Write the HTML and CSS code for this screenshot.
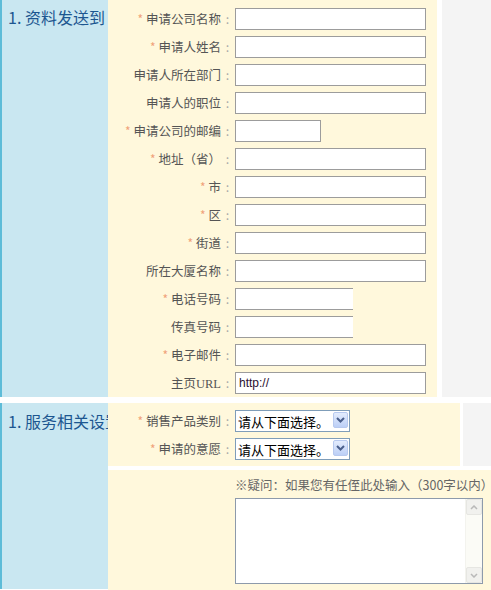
FILE: index.html
```html
<!DOCTYPE HTML>
<html lang="zh-CN">
<head>
    <meta charset="utf-8">
    <title>申请表</title>
    <link rel="stylesheet" href="styles.css">
</head>
<body>
    <div class="page">
        <div class="section s1">
            <div class="side"><h2>1. 资料发送到</h2></div>
            <div class="panel">
                <div class="row"><label><span class="req">*</span>申请公司名称<span class="colon">:</span></label><input type="text" class="w-full"></div>
                <div class="row"><label><span class="req">*</span>申请人姓名<span class="colon">:</span></label><input type="text" class="w-full"></div>
                <div class="row"><label>申请人所在部门<span class="colon">:</span></label><input type="text" class="w-full"></div>
                <div class="row"><label>申请人的职位<span class="colon">:</span></label><input type="text" class="w-full"></div>
                <div class="row"><label><span class="req">*</span>申请公司的邮编<span class="colon">:</span></label><input type="text" class="w-zip"></div>
                <div class="row"><label><span class="req">*</span>地址（省）<span class="colon">:</span></label><input type="text" class="w-full"></div>
                <div class="row"><label><span class="req">*</span>市<span class="colon">:</span></label><input type="text" class="w-full"></div>
                <div class="row"><label><span class="req">*</span>区<span class="colon">:</span></label><input type="text" class="w-full"></div>
                <div class="row"><label><span class="req">*</span>街道<span class="colon">:</span></label><input type="text" class="w-full"></div>
                <div class="row"><label>所在大厦名称<span class="colon">:</span></label><input type="text" class="w-full"></div>
                <div class="row"><label><span class="req">*</span>电话号码<span class="colon">:</span></label><input type="text" class="w-tel"></div>
                <div class="row"><label>传真号码<span class="colon">:</span></label><input type="text" class="w-tel"></div>
                <div class="row"><label><span class="req">*</span>电子邮件<span class="colon">:</span></label><input type="text" class="w-full"></div>
                <div class="row"><label>主页<span class="latin">URL</span><span class="colon">:</span></label><input type="text" class="w-full" value="http://"></div>
            </div>
            <div class="filler"></div>
        </div>

        <div class="section s2">
            <div class="side"><h2>1. 服务相关设置</h2></div>
            <div class="body">
                <div class="block-a">
                    <div class="panel">
                        <div class="row">
                            <label><span class="req">*</span>销售产品类别<span class="colon">:</span></label>
                            <div class="sel">
                                <select><option>请从下面选择。</option></select>
                                <span class="sel-btn"><svg width="9" height="6" viewBox="0 0 9 6"><path d="M1 1 L4.5 4.5 L8 1" fill="none" stroke="#4a5f8c" stroke-width="2"/></svg></span>
                            </div>
                        </div>
                        <div class="row">
                            <label><span class="req">*</span>申请的意愿<span class="colon">:</span></label>
                            <div class="sel">
                                <select><option>请从下面选择。</option></select>
                                <span class="sel-btn"><svg width="9" height="6" viewBox="0 0 9 6"><path d="M1 1 L4.5 4.5 L8 1" fill="none" stroke="#4a5f8c" stroke-width="2"/></svg></span>
                            </div>
                        </div>
                    </div>
                    <div class="filler"></div>
                </div>
                <div class="panel panel-full">
                    <p class="note">※疑问：如果您有任侄此处输入（300字以内）</p>
                    <div class="textbox">
                        <textarea></textarea>
                        <div class="vscroll">
                            <span class="sb-btn"><svg width="8" height="5" viewBox="0 0 8 5"><path d="M1 4 L4 1 L7 4" fill="none" stroke="#b9b9b9" stroke-width="1.5"/></svg></span>
                            <span class="sb-track"></span>
                            <span class="sb-btn"><svg width="8" height="5" viewBox="0 0 8 5"><path d="M1 1 L4 4 L7 1" fill="none" stroke="#b9b9b9" stroke-width="1.5"/></svg></span>
                        </div>
                    </div>
                </div>
            </div>
        </div>
    </div>
</body>
</html>
```

FILE: styles.css
```css
body {
    margin: 0;
    background: #fff;
    font-family: "Noto Sans CJK SC", "Liberation Sans", sans-serif;
    font-size: 12.5px;
    color: #555;
}
.page {
    width: 491px;
    overflow: hidden;
}
.section {
    display: flex;
}
.s1 {
    margin-bottom: 6px;
}
.side {
    width: 106px;
    flex: none;
    background: #c9e7f1;
    border-left: 2px solid #5dbcd8;
    overflow: hidden;
    white-space: nowrap;
}
.side h2 {
    margin: 0;
    padding: 7px 0 0 6px;
    font-size: 16px;
    line-height: 20px;
    font-weight: normal;
    color: #1c5690;
}
.panel {
    background: #fff8dc;
    display: flex;
    flex-direction: column;
    gap: 6px;
}
.s1 .panel {
    width: 329px;
    padding: 8px 0 3px;
}
.filler {
    flex: 1;
    background: #f4f4f4;
    margin-left: 5px;
}
.row {
    display: flex;
    align-items: center;
    height: 22px;
}
.row label {
    width: 126px;
    flex: none;
    text-align: right;
    white-space: nowrap;
    line-height: 22px;
}
.req {
    color: #f0a27a;
    margin-right: 3px;
    font-size: 12px;
}
.colon {
    display: inline-block;
    width: 13px;
    text-align: center;
    color: #aaa;
}
.latin {
    font-family: "Liberation Serif", serif;
}
input {
    margin: 0 0 0 1px;
    height: 22px;
    box-sizing: border-box;
    border: 1px solid #9c9c9c;
    background: #fff;
    padding: 0 3px;
    font-family: "Liberation Sans", sans-serif;
    font-size: 12px;
    color: #2a1030;
}
.w-full {
    width: 191px;
}
.w-zip {
    width: 86px;
}
.w-tel {
    width: 118px;
    border-right: none;
}

/* section 2 */
.s2 .side {
    margin-bottom: 5px;
}
.s2 .side h2 {
    padding-top: 8px;
}
.body {
    flex: 1;
    display: flex;
    flex-direction: column;
    gap: 4px;
}
.block-a {
    display: flex;
}
.block-a .panel {
    width: 352px;
    padding: 7px 0 6px;
}
.block-a .filler {
    margin-left: 3px;
}
.sel {
    position: relative;
    margin-left: 1px;
    width: 115px;
    height: 22px;
}
.sel select {
    appearance: none;
    width: 100%;
    height: 100%;
    margin: 0;
    border: 1px solid #7f9db9;
    border-radius: 0;
    background: #fff;
    padding: 0 0 0 2px;
    font-family: "Noto Sans CJK SC", sans-serif;
    font-size: 13px;
    color: #000;
}
.sel-btn {
    position: absolute;
    top: 2px;
    right: 2px;
    width: 15px;
    height: 16px;
    box-sizing: border-box;
    border: 1px solid #b7c9ef;
    border-radius: 2px;
    background: linear-gradient(#e3ecfd, #bccff6);
    display: flex;
    align-items: center;
    justify-content: center;
    pointer-events: none;
}

/* question block */
.panel-full {
    gap: 0;
    padding: 7px 0 10px 127px;
}
.note {
    margin: 0 0 6px;
    font-size: 12.5px;
    line-height: 15px;
    color: #666;
    white-space: nowrap;
}
.textbox {
    width: 248px;
    height: 86px;
    box-sizing: border-box;
    border: 1px solid #8d9aab;
    background: #fff;
    display: flex;
}
.textbox textarea {
    flex: 1;
    border: none;
    resize: none;
    outline: none;
    margin: 0;
    padding: 2px;
}
.vscroll {
    width: 16px;
    display: flex;
    flex-direction: column;
    background: #fbfbf6;
    border-left: 1px solid #f3f3ee;
}
.sb-btn {
    height: 16px;
    box-sizing: border-box;
    border: 1px solid #e6e6e2;
    border-radius: 2px;
    background: #f1f1ee;
    display: flex;
    align-items: center;
    justify-content: center;
}
.sb-track {
    flex: 1;
}
```
